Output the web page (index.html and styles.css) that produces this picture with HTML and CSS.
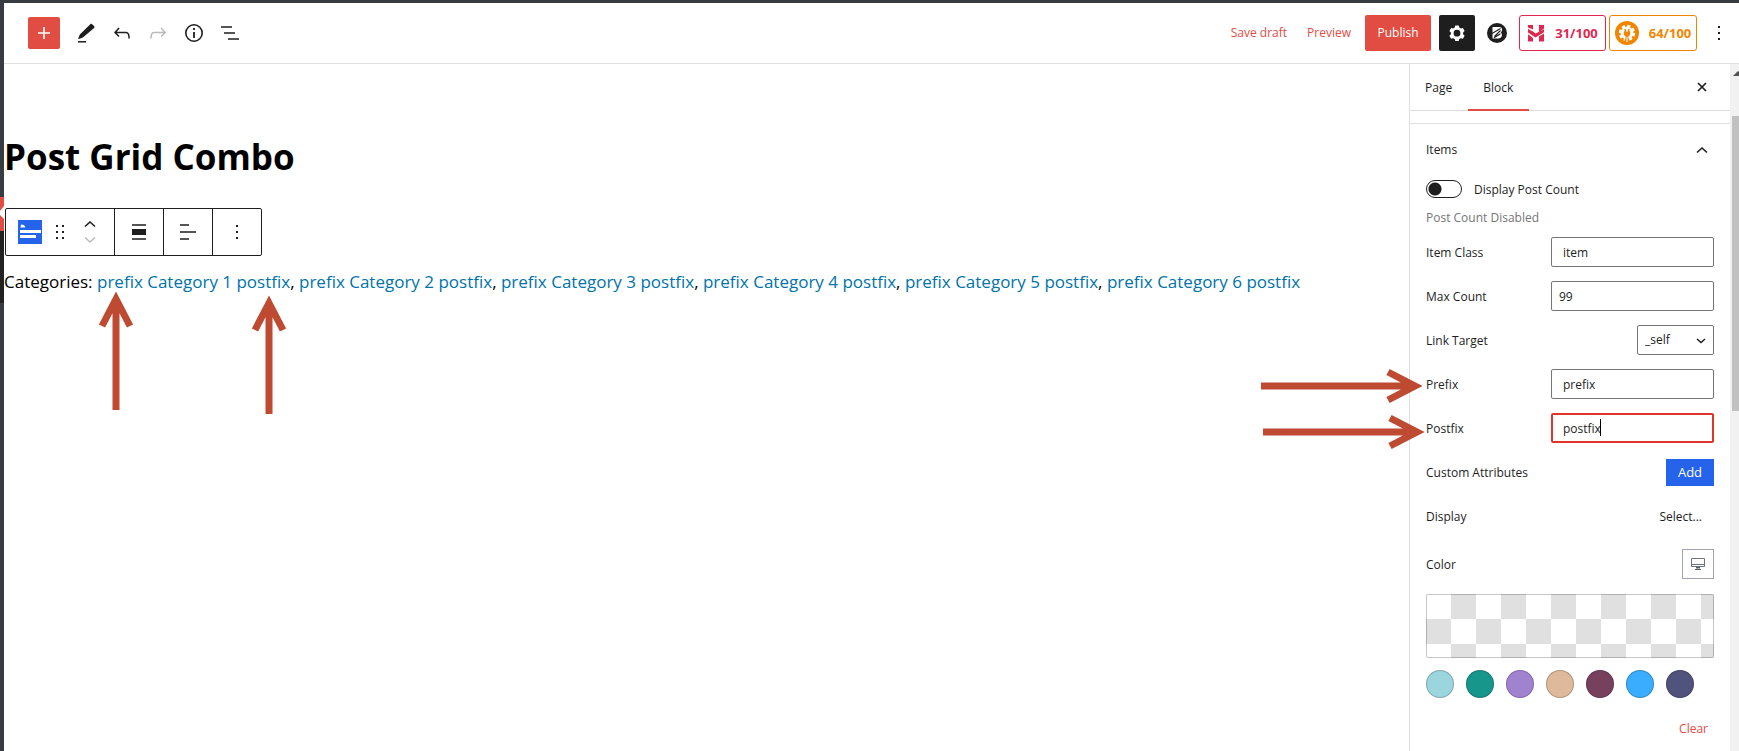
FILE: index.html
```
<!DOCTYPE html>
<html lang="en">
<head>
<meta charset="utf-8">
<title>Edit Page</title>
<link rel="stylesheet" href="styles.css">
</head>
<body>
<div class="shell">
  <div class="rail"><div class="rail-current"></div><div class="rail-submenu"></div></div>
  <div class="editor">
    <header class="topbar">
      <div class="tools">
        <button class="add-block" aria-label="Add block"><svg width="24" height="24" viewBox="0 0 24 24"><path d="M12 6v12M6 12h12" stroke="#fff" stroke-width="1.6"/></svg></button>
        <button class="tool" aria-label="Tools"><svg width="24" height="24" viewBox="0 0 24 24"><path d="M20.1 5.1l-2-1.9c-.6-.5-1.300-.5-1.800 0L5.800 13.600 4.300 17.500c-.1.400.2.700.6.600l4-1.500L20.100 6.900c.5-.5.5-1.300 0-1.800z" fill="#1e1e1e"/><path d="M4 20.800h8" stroke="#1e1e1e" stroke-width="1.500"/></svg></button>
        <button class="tool" aria-label="Undo"><svg width="24" height="24" viewBox="0 0 24 24"><path d="M18.300 11.700c-.6-.6-1.400-.9-2.300-.9H6.700l2.900-3.300-1.100-1-4.500 5L8.500 16l1-1-2.700-2.700H16c.5 0 .9.2 1.300.5 1 1 1 3.400 1 4.500v.3h1.500v-.2c0-1.500 0-4.300-1.500-5.700z" fill="#1e1e1e"/></svg></button>
        <button class="tool" aria-label="Redo" disabled><svg width="24" height="24" viewBox="0 0 24 24"><path d="M15.600 6.500l-1.100 1 2.900 3.300H8c-.9 0-1.700.3-2.300.9-1.400 1.500-1.400 4.200-1.400 5.600v.2h1.500v-.3c0-1.100 0-3.500 1-4.500.3-.3.700-.5 1.300-.5h9.200L14.500 15l1.100 1.100 4.600-4.600-4.600-5z" fill="#bbb"/></svg></button>
        <button class="tool" aria-label="Details"><svg width="24" height="24" viewBox="0 0 24 24"><circle cx="12" cy="12" r="8.200" fill="none" stroke="#1e1e1e" stroke-width="1.600"/><path d="M12 11v6M12 7v2" stroke="#1e1e1e" stroke-width="1.800"/></svg></button>
        <button class="tool" aria-label="List view"><svg width="24" height="24" viewBox="0 0 24 24"><path d="M3 6h11M6 12h11M10 18h11" stroke="#1e1e1e" stroke-width="1.600"/></svg></button>
      </div>
      <div class="actions">
        <button class="text-action">Save draft</button>
        <button class="text-action preview">Preview</button>
        <button class="publish">Publish</button>
        <button class="settings" aria-label="Settings"><svg width="24" height="24" viewBox="0 0 24 24"><path fill="#fff" fill-rule="evenodd" d="M10.300 4.500h3.400l.6 2 1.500.9 2.100-.5 1.700 3-1.500 1.500v1.800l1.500 1.500-1.700 3-2.100-.5-1.500.9-.6 2h-3.400l-.6-2-1.500-.9-2.100.5-1.700-3 1.500-1.500v-1.800L4.400 9.900l1.700-3 2.100.5 1.500-.9zM12 8.800a3.400 3.400 0 100 6.800 3.400 3.400 0 000-6.800z"/></svg></button>
        <button class="round-tool" aria-label="Blocks"><svg width="20" height="20" viewBox="0 0 20 20"><circle cx="10" cy="10" r="10" fill="#1e1e1e"/><path d="M5.500 4h7c3.200 0 3.300 4 1.300 5.500 2.200 1.800 1.200 6-2.300 6h-6z" fill="#fff"/><path d="M5 10.500l8.500-5M7.500 13.500l6-6M7 14.800l6.500-4" stroke="#1e1e1e" stroke-width="1.100"/></svg></button>
        <button class="score score-red"><svg width="18" height="18" viewBox="0 0 18 18"><path fill="#e0284f" d="M1 1h5v4.500L1 3.500zM12 1h5v3.500l-5 3.500zM1 4.800c2 1.600 4 2 5 2.700l2.500 2L17 5.300v2.900L8.500 13.500 1 8.500zM1 10.300l5 3.700v3.500H1zM12 12.500l5-3v8h-5z"/></svg><span>31/100</span></button>
        <button class="score score-orange"><svg width="24" height="24" viewBox="0 0 24 24"><circle cx="12" cy="12" r="12" fill="#f18500"/><circle cx="12" cy="12" r="6.500" fill="#fff"/><circle cx="12" cy="12" r="7" fill="none" stroke="#fff" stroke-width="2.500" stroke-dasharray="3.200 2.300"/><path d="M8.800 10.500h6.400v2c0 1.800-1 2.600-2 2.900l1.300 5.600h-5l1.300-5.600c-1-.3-2-1.100-2-2.900zM9.500 8H11v3H9.500zM13 8h1.500v3H13z" fill="#f18500"/><path d="M11.500 16h1v5h-1z" fill="#fff"/></svg><span>64/100</span></button>
        <button class="more" aria-label="Options"><svg width="24" height="24" viewBox="0 0 24 24"><path d="M11 5h2v2h-2zM11 11h2v2h-2zM11 17h2v2h-2z" fill="#1e1e1e"/></svg></button>
      </div>
    </header>
    <div class="workspace">
      <main class="canvas">
        <h1 class="page-title">Post Grid Combo</h1>
        <div class="block-toolbar" role="toolbar">
          <div class="group group-block">
            <button aria-label="Block type"><svg width="24" height="24" viewBox="0 0 24 24"><path fill="#2563eb" d="M0 0h24v24H0z"/><path fill="#fff" d="M2 10h21v3H2zM2 15h16v3H2zM3 4.500l3 .5 1.500 2.500H2.500z"/></svg></button>
            <button aria-label="Drag"><svg width="10" height="16" viewBox="0 0 10 16"><path fill="#1e1e1e" d="M1 1h2v2H1zM7 1h2v2H7zM1 7h2v2H1zM7 7h2v2H7zM1 13h2v2H1zM7 13h2v2H7z"/></svg></button>
            <span class="movers">
              <button aria-label="Move up"><svg width="12" height="8" viewBox="0 0 12 8"><path d="M1 6.500l5-4.500 5 4.500" fill="none" stroke="#1e1e1e" stroke-width="1.600"/></svg></button>
              <button aria-label="Move down" disabled><svg width="12" height="8" viewBox="0 0 12 8"><path d="M1 1.500L6 6l5-4.500" fill="none" stroke="#bbb" stroke-width="1.600"/></svg></button>
            </span>
          </div>
          <div class="group"><button aria-label="Align"><svg width="24" height="24" viewBox="0 0 24 24"><path d="M5 5h14M5 19h14" stroke="#1e1e1e" stroke-width="1.500"/><path d="M5 9h14v6H5z" fill="#1e1e1e"/></svg></button></div>
          <div class="group"><button aria-label="Text align"><svg width="24" height="24" viewBox="0 0 24 24"><path d="M4 5h9M4 12h16M4 19h9" stroke="#1e1e1e" stroke-width="1.500"/></svg></button></div>
          <div class="group"><button aria-label="More"><svg width="24" height="24" viewBox="0 0 24 24"><path d="M11 5h2v2h-2zM11 11h2v2h-2zM11 17h2v2h-2z" fill="#1e1e1e"/></svg></button></div>
        </div>
        <p class="categories">Categories: <a href="#">prefix Category 1 postfix</a>, <a href="#">prefix Category 2 postfix</a>, <a href="#">prefix Category 3 postfix</a>, <a href="#">prefix Category 4 postfix</a>, <a href="#">prefix Category 5 postfix</a>, <a href="#">prefix Category 6 postfix</a></p>
        <svg class="arrow arrow-up-1" width="36" height="120" viewBox="0 0 36 120"><path d="M18 118V8M4 34L18 7l14 27"/></svg>
        <svg class="arrow arrow-up-2" width="36" height="120" viewBox="0 0 36 120"><path d="M18 118V8M4 34L18 7l14 27"/></svg>
      </main>
      <aside class="sidebar">
        <div class="tabs">
          <button class="tab">Page</button>
          <button class="tab active">Block</button>
          <button class="close" aria-label="Close"><svg width="10" height="10" viewBox="0 0 10 10"><path d="M1 1l8 8M9 1L1 9" stroke="#1e1e1e" stroke-width="1.700"/></svg></button>
        </div>
        <section class="panel">
          <button class="panel-title"><span>Items</span><svg width="12" height="8" viewBox="0 0 12 8"><path d="M1 6.500l5-4.500 5 4.500" fill="none" stroke="#1e1e1e" stroke-width="1.600"/></svg></button>
          <label class="toggle-row"><input type="checkbox" class="toggle"><span>Display Post Count</span></label>
          <p class="help">Post Count Disabled</p>
          <div class="rows">
            <div class="row"><label for="cls">Item Class</label><input id="cls" class="field" type="text" value="item"></div>
            <div class="row"><label for="max">Max Count</label><input id="max" class="field field-number" type="number" value="99"></div>
            <div class="row"><label for="target">Link Target</label><span class="select-wrap"><select id="target"><option>_self</option><option>_blank</option></select><svg width="10" height="6" viewBox="0 0 10 6"><path d="M1 1l4 3.500L9 1" fill="none" stroke="#1e1e1e" stroke-width="1.500"/></svg></span></div>
            <div class="row"><label for="prefix">Prefix</label><input id="prefix" class="field" type="text" value="prefix"></div>
            <div class="row"><label for="postfix">Postfix</label><span class="focus-wrap"><input id="postfix" class="field focused" type="text" value="postfix"><i class="caret"></i></span></div>
            <div class="row"><span>Custom Attributes</span><button class="add">Add</button></div>
            <div class="row"><span>Display</span><button class="pick">Select...</button></div>
          </div>
          <div class="row color-row"><span>Color</span><button class="device" aria-label="Desktop"><svg width="14" height="14" viewBox="0 0 14 14"><path d="M.5 1.500h13v8H.5zM.5 7.500h13" fill="none" stroke="#6b7280"/><path d="M5 10h4v1.500H5zM4 12h6v1H4z" fill="#555d66"/></svg></button></div>
          <button class="checker" aria-label="Custom color picker"></button>
          <div class="swatches">
            <button class="swatch c1" aria-label="Light teal"></button><button class="swatch c2" aria-label="Teal"></button><button class="swatch c3" aria-label="Purple"></button><button class="swatch c4" aria-label="Tan"></button><button class="swatch c5" aria-label="Plum"></button><button class="swatch c6" aria-label="Blue"></button><button class="swatch c7" aria-label="Indigo"></button>
          </div>
          <button class="clear">Clear</button>
        </section>
        <svg class="arrow arrow-side-1" width="164" height="36" viewBox="0 0 164 36"><path d="M1 18h153M128 4l27 14-27 14"/></svg>
        <svg class="arrow arrow-side-2" width="164" height="36" viewBox="0 0 164 36"><path d="M1 18h153M128 4l27 14-27 14"/></svg>
      </aside>
      <div class="scrollbar"><i class="scroll-up"></i><div class="thumb"></div></div>
    </div>
  </div>
</div>
</body>
</html>
```

FILE: styles.css
```
* { box-sizing: border-box; }
body {
  margin: 0;
  font: 12px/16px "Open Sans", "Noto Sans", sans-serif;
  color: #1e1e1e;
  background: #fff;
}
button, input, select { font: inherit; color: inherit; margin: 0; }
button { padding: 0; border: 0; background: none; display: flex; align-items: center; justify-content: center; }
svg { display: block; flex: none; }

.shell { display: grid; grid-template-columns: 4px 1fr; height: 100vh; border-top: 3px solid #373c41; overflow: hidden; }
.rail { background: #373c41; padding-top: 194px; }
.rail-current { height: 34px; background: #e14d43; }
.rail-current::after { content: ""; display: block; height: 34px; background: #fff; clip-path: polygon(100% 9px, 0 14px, 0 18px, 100% 22px); }
.rail-submenu { height: 72px; background: #222; }
.editor { display: grid; grid-template-rows: auto 1fr; min-width: 0; min-height: 0; }

.topbar { display: flex; justify-content: space-between; align-items: center; padding: 12px 8px 12px 24px; border-bottom: 1px solid #e0e0e0; }
.tools, .actions { display: flex; align-items: center; }
.add-block { width: 32px; height: 32px; background: #e14d43; border-radius: 2px; margin-right: 8px; }
.tool { width: 36px; height: 36px; }
.text-action { color: #e14d43; margin-right: 20px; }
.preview { margin-right: 14px; }
.publish { width: 66px; height: 36px; background: #e14d43; color: #fff; border-radius: 2px; margin-right: 8px; }
.settings { width: 36px; height: 36px; background: #1e1e1e; border-radius: 2px; }
.round-tool { width: 20px; margin: 0 12px; }
.score { height: 36px; border: 1px solid; border-radius: 3px; font-weight: 700; font-size: 13px; }
.score-red { width: 87px; color: #e0284f; gap: 10px; margin-right: 3px; }
.score-orange { width: 88px; color: #f18500; gap: 10px; }
.more { width: 24px; margin-left: 10px; }

.workspace { display: grid; grid-template-columns: 1fr 321px 9px; min-height: 0; }
.canvas { position: relative; padding-top: 69px; }
.page-title { margin: 0 0 27px; font-size: 35px; line-height: 48px; font-weight: 700; color: #000; }
.block-toolbar { display: inline-flex; height: 48px; margin-left: 1px; border: 1px solid #1e1e1e; border-radius: 2px; }
.group { display: flex; align-items: center; justify-content: center; width: 49px; border-left: 1px solid #1e1e1e; }
.group-block { width: 108px; border-left: 0; justify-content: flex-start; padding-left: 12px; gap: 13px; }
.movers { display: grid; gap: 8px; margin-left: 6px; }
.categories { margin: 14px 0 0; font-size: 17px; line-height: 24px; color: #000; white-space: nowrap; }
.categories a { color: #0073aa; text-decoration: none; }

.arrow { position: absolute; fill: none; stroke: #bd4a31; stroke-width: 7; pointer-events: none; overflow: visible; }
.arrow-up-1 { left: 94px; top: 228px; }
.arrow-up-2 { left: 247px; top: 232px; }
.arrow-side-1 { left: -150px; top: 304px; }
.arrow-side-2 { left: -148px; top: 350px; }

.sidebar { position: relative; border-left: 1px solid #e0e0e0; }
.tabs { display: flex; height: 47px; border-bottom: 1px solid #ddd; padding-right: 16px; }
.tab { padding: 2px 16px 0 15px; font-weight: 500; }
.tab.active { border-bottom: 2px solid #e14d43; margin-bottom: -1px; }
.close { margin-left: auto; width: 24px; }
.panel { margin-top: 12px; border-top: 1px solid #e0e0e0; padding: 0 16px; }
.panel-title { width: 100%; height: 52px; justify-content: space-between; padding: 0 6px 0 0; font-weight: 500; }
.toggle-row { display: flex; align-items: center; gap: 12px; margin-top: 4px; height: 18px; }
.toggle { appearance: none; width: 36px; height: 18px; margin: 0; border: 1px solid #1e1e1e; border-radius: 9px; background: radial-gradient(circle at 8px 8px, #1e1e1e 6px, transparent 7px); }
.toggle-row span, .row > label, .row > span:first-child { padding-top: 2px; }
.help { margin: 12px 0 11px; color: #757575; }
.rows { display: grid; gap: 14px; }
.row { display: flex; align-items: center; justify-content: space-between; height: 30px; }
.field { width: 163px; height: 30px; padding: 0 11px; border: 1px solid #757575; border-radius: 2px; background: #fff; outline: 0; }
.field-number { padding: 0 7px; appearance: textfield; }
.field-number::-webkit-inner-spin-button { appearance: none; }
.focus-wrap, .select-wrap { position: relative; display: flex; }
.focused { border: 2px solid #e1352b; padding: 0 10px; }
.caret { position: absolute; left: 49px; top: 6px; width: 1px; height: 17px; background: #000; }
.select-wrap select { appearance: none; width: 77px; height: 30px; padding: 0 7px; border: 1px solid #757575; border-radius: 2px; background: #fff; }
.select-wrap svg { position: absolute; right: 8px; top: 13px; pointer-events: none; }
.add { width: 48px; height: 27px; background: #2563eb; color: #fff; font-size: 13px; }
.pick { padding: 2px 12px 0 0; }
.color-row { margin-top: 18px; }
.device { width: 32px; height: 30px; border: 1px solid #9ca3af; }
.checker { width: 100%; height: 64px; margin-top: 15px; border: 1px solid rgba(0, 0, 0, .22); border-radius: 2px; background: repeating-conic-gradient(#e0e0e0 0 25%, #fff 0 50%) 0 0 / 50px 50px border-box; background-origin: border-box; }
.swatches { display: flex; gap: 12px; margin-top: 12px; }
.swatch { width: 28px; height: 28px; border-radius: 50%; border: 1px solid rgba(0, 0, 0, .2); }
.c1 { background: #9bd5de; }
.c2 { background: #17968b; }
.c3 { background: #a083cf; }
.c4 { background: #deb99b; }
.c5 { background: #77415e; }
.c6 { background: #3aadff; }
.c7 { background: #50537b; }
.clear { margin: 23px 6px 0 auto; color: #e14d43; }

.scrollbar { background: #f1f1f1; padding: 7px 0 0 2px; overflow: hidden; }
.scroll-up { display: block; width: 10px; height: 5px; margin-left: 1px; background: #505050; clip-path: polygon(50% 0, 100% 100%, 0 100%); }
.thumb { height: 295px; margin-top: 40px; background: #c1c1c1; }
```
